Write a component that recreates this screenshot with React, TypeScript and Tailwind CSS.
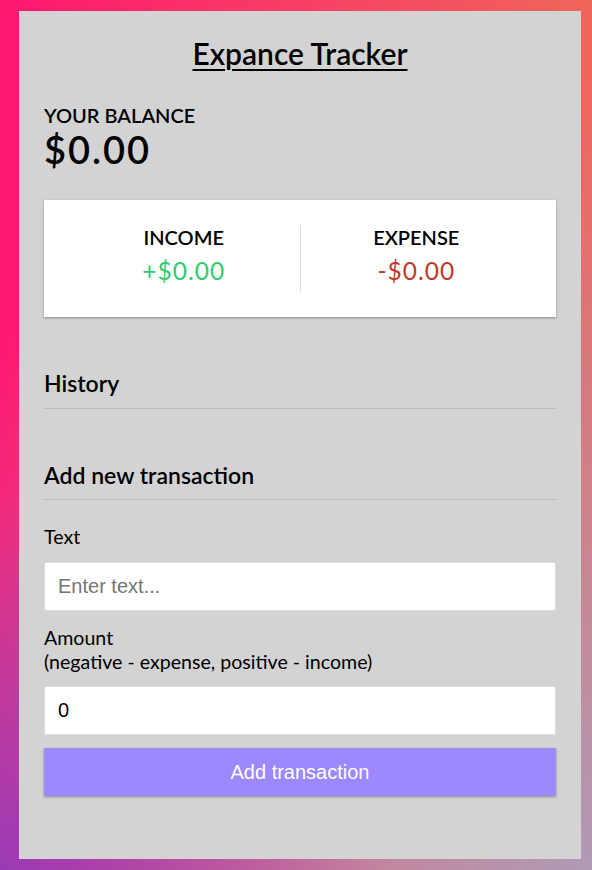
import React from "react";

export default function App() {
  return (
    <div className="min-h-[870px] w-full pl-[19px] pr-[11px] pt-[11px] pb-[11px] [background-image:radial-gradient(circle_at_0%_100%,#9a3bb5_0,rgba(154,59,181,0)_380px),radial-gradient(circle_at_100%_100%,#b09ab5_0,rgba(176,154,181,0)_800px),linear-gradient(to_right,#ff1670,#f0665a)] font-['Lato','Noto_Sans',sans-serif] text-black">
      <div className="h-[848px] bg-[#d3d3d3] px-[25px] pt-[24px]">
        <h2 className="text-center text-[30px] leading-[36px] font-semibold underline decoration-[2px] underline-offset-[4px]">
          Expance Tracker
        </h2>

        <h4 className="mt-[32px] text-[20px] leading-[24px] font-semibold uppercase">
          Your Balance
        </h4>
        <h1 className="text-[38px] leading-[44px] font-semibold tracking-[2px]">
          $0.00
        </h1>

        <div className="mt-[29px] flex bg-white px-[24px] py-[25px] shadow-[0_1px_3px_rgba(0,0,0,0.12),0_1px_2px_rgba(0,0,0,0.24)]">
          <div className="flex h-[67px] flex-1 flex-col items-center border-r border-[#dedede]">
            <h4 className="text-[20px] leading-[24px] font-semibold uppercase">Income</h4>
            <p className="mt-[7px] text-[24.5px] leading-[30px] tracking-[1px] text-[#2ecc71]">+$0.00</p>
          </div>
          <div className="flex h-[67px] flex-1 flex-col items-center">
            <h4 className="text-[20px] leading-[24px] font-semibold uppercase">Expense</h4>
            <p className="mt-[7px] text-[24.5px] leading-[30px] tracking-[1px] text-[#c0392b]">-$0.00</p>
          </div>
        </div>

        <h3 className="mt-[53px] border-b border-[#bbbbbb] pb-[12px] text-[23px] leading-[26px] font-semibold">
          History
        </h3>

        <h3 className="mt-[53px] border-b border-[#bbbbbb] pb-[11px] text-[23px] leading-[26px] font-semibold">
          Add new transaction
        </h3>

        <form className="mt-[25px] flex flex-col" onSubmit={(e) => e.preventDefault()}>
          <label className="text-[19.6px] leading-[24px]">Text</label>
          <input
            type="text"
            placeholder="Enter text..."
            className="mt-[13px] h-[49px] w-full rounded-[2px] border border-[#dedede] bg-white pl-[13px] font-['Liberation_Sans',Arial,sans-serif] text-[20px] text-black placeholder:text-[#757575] outline-none"
          />
          <label className="mt-[15px] text-[19.6px] leading-[24px]">
            Amount
            <br />
            (negative - expense, positive - income)
          </label>
          <input
            type="number"
            defaultValue={0}
            className="mt-[12px] h-[49px] w-full rounded-[2px] border border-[#dedede] bg-white pl-[13px] font-['Liberation_Sans',Arial,sans-serif] text-[20px] text-black outline-none [appearance:textfield]"
          />
          <button
            type="submit"
            className="mt-[13px] h-[48px] w-full bg-[#9c88ff] font-['Liberation_Sans',Arial,sans-serif] text-[20px] text-white shadow-[0_1px_3px_rgba(0,0,0,0.12),0_1px_2px_rgba(0,0,0,0.24)]"
          >
            Add transaction
          </button>
        </form>
      </div>
    </div>
  );
}
